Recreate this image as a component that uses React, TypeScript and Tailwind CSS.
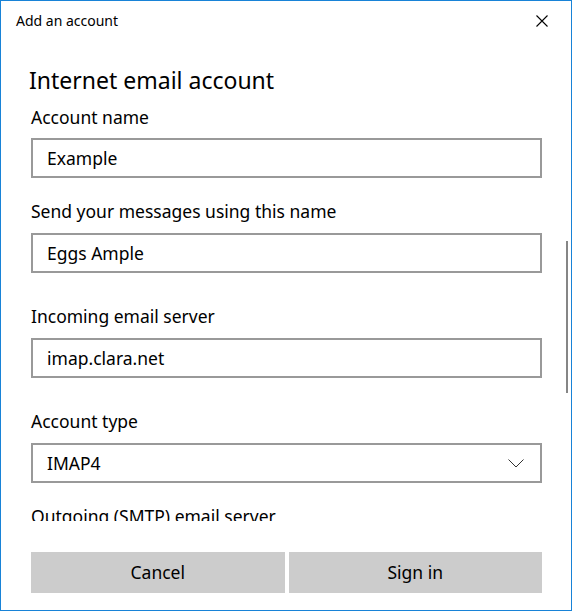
import React from 'react';

const fieldBox = 'h-[40px] border-2 border-[#999999] bg-white flex items-center pl-[14px] pr-[16px] text-[17.5px] text-black';

const Label: React.FC<{ text: string; className?: string }> = ({ text, className }) => (
  <div className={`h-[28px] leading-[28px] text-[17.5px] text-black whitespace-nowrap ${className ?? ''}`}>{text}</div>
);

export default function App() {
  return (
    <div className="w-[572px] h-[611px] border border-[#1883d7] bg-white flex flex-col font-['Noto_Sans',sans-serif] text-black">
      {/* title bar */}
      <div className="h-[39px] flex items-center justify-between pl-[15px] pr-[23px]">
        <span className="text-[14px] leading-none">Add an account</span>
        <svg width="12" height="12" viewBox="0 0 12 12" className="text-black">
          <path d="M0.5 0.5 L11.5 11.5 M11.5 0.5 L0.5 11.5" stroke="currentColor" strokeWidth="1.1" fill="none" />
        </svg>
      </div>

      {/* scrollable form */}
      <div className="relative h-[481px] overflow-hidden">
        <div className="pl-[28px] pr-[29px]">
          <div className="mt-[24px] h-[32px] leading-[32px] text-[23px] whitespace-nowrap">Internet email account</div>
        </div>
        <div className="pl-[30px] pr-[29px]">
          <Label text="Account name" className="mt-[7px]" />
          <div className={`mt-[7px] ${fieldBox}`}>Example</div>

          <Label text="Send your messages using this name" className="mt-[19px]" />
          <div className={`mt-[8px] ${fieldBox}`}>Eggs Ample</div>

          <Label text="Incoming email server" className="mt-[29px]" />
          <div className={`mt-[8px] ${fieldBox}`}>imap.clara.net</div>

          <Label text="Account type" className="mt-[29px]" />
          <div className={`mt-[8px] ${fieldBox} justify-between`}>
            <span>IMAP4</span>
            <svg width="16" height="9" viewBox="0 0 16 9">
              <path d="M0.5 0.5 L8 8 L15.5 0.5" stroke="#333" strokeWidth="1" fill="none" />
            </svg>
          </div>

          <Label text="Outgoing (SMTP) email server" className="mt-[19px]" />
        </div>
        <div className="absolute right-[3px] top-[201px] w-[2px] h-[152px] bg-[#868686]" />
      </div>

      {/* actions */}
      <div className="pt-[31px] pb-[17px] pl-[30px] pr-[29px] grid grid-cols-2 gap-[4px]">
        <button className="h-[41px] bg-[#cccccc] text-[17.5px] text-black">Cancel</button>
        <button className="h-[41px] bg-[#cccccc] text-[17.5px] text-black">Sign in</button>
      </div>
    </div>
  );
}
